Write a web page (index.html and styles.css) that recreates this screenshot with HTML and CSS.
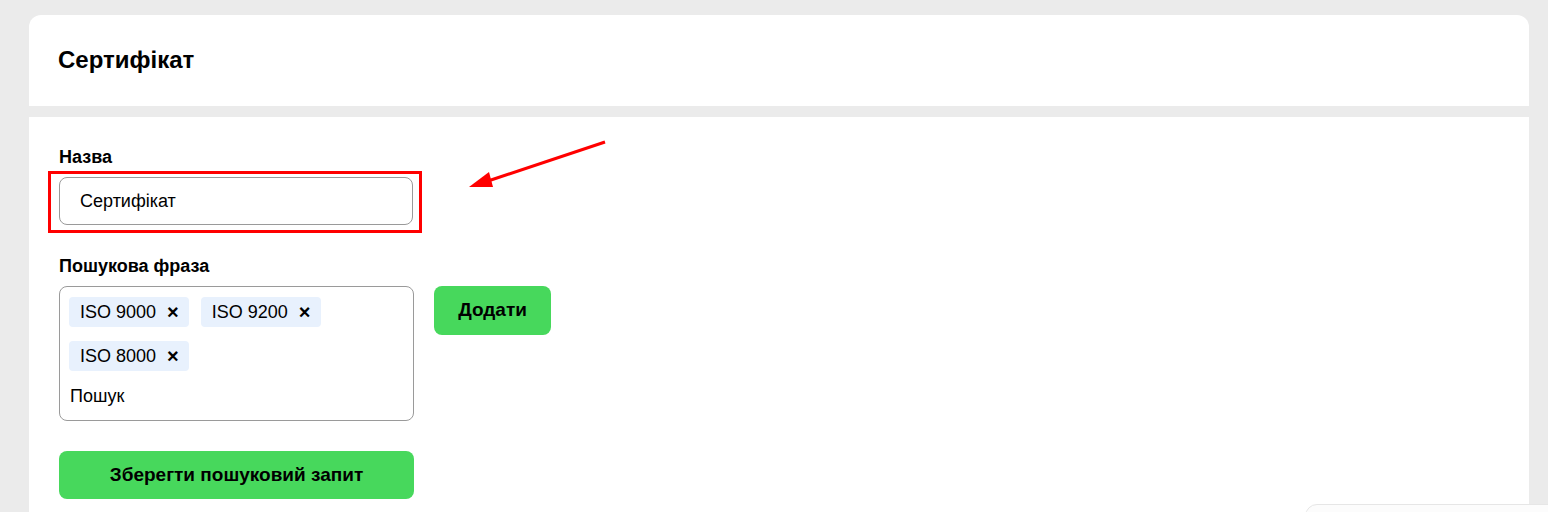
FILE: index.html
```html
<!DOCTYPE html>
<html lang="uk">
<head>
<meta charset="utf-8">
<title>Сертифікат</title>
<link rel="stylesheet" href="styles.css">
</head>
<body>
<div class="page">
  <div class="card card-head">
    <h1 class="title">Сертифікат</h1>
  </div>
  <div class="card card-body">
    <div class="field">
      <label class="label">Назва</label>
      <div class="highlight">
        <div class="input">Сертифікат</div>
      </div>
    </div>
    <div class="field">
      <label class="label">Пошукова фраза</label>
      <div class="phrase-row">
        <div class="tagbox">
          <div class="tags">
            <span class="tag">ISO 9000<span class="x">×</span></span>
            <span class="tag">ISO 9200<span class="x">×</span></span>
            <span class="tag">ISO 8000<span class="x">×</span></span>
          </div>
          <div class="search">Пошук</div>
        </div>
        <button class="btn btn-add">Додати</button>
      </div>
    </div>
    <button class="btn btn-save">Зберегти пошуковий запит</button>
  </div>
  <svg class="arrow" width="160" height="60" viewBox="0 0 160 60">
    <line x1="145" y1="3" x2="28" y2="42" stroke="#ff0000" stroke-width="3"/>
    <polygon points="9,48 29,33 33,48" fill="#ff0000"/>
  </svg>
  <div class="widget"></div>
</div>
</body>
</html>
```
FILE: styles.css
```css
* { box-sizing: border-box; }
html, body { margin: 0; padding: 0; }
body {
  background: #ebebeb;
  font-family: "Liberation Sans", Arial, sans-serif;
  color: #000;
  width: 1548px;
  height: 512px;
  overflow: hidden;
}
.page {
  position: relative;
  padding: 15px 19px 0 29px;
  display: flex;
  flex-direction: column;
  gap: 11px;
  height: 512px;
  overflow: hidden;
}
.card { background: #fff; }
.card-head {
  height: 91px;
  border-radius: 12px 12px 0 0;
  display: flex;
  align-items: center;
  padding-left: 29px;
  flex: none;
}
.title {
  margin: 0;
  font-size: 24px;
  font-weight: 700;
  padding-bottom: 1px;
}
.card-body {
  flex: 1;
  padding: 30px 30px 0 30px;
  display: flex;
  flex-direction: column;
  align-items: flex-start;
}
.field { display: flex; flex-direction: column; }
.label {
  font-size: 18px;
  font-weight: 700;
  line-height: 20px;
  margin-bottom: 10px;
}
.highlight {
  border: 3px solid #ff0000;
  padding: 3px 6px 5px 8px;
  margin: -6px 0 -8px -11px;
  width: 374px;
}
.input {
  border: 1px solid #9a9a9a;
  border-radius: 8px;
  height: 48px;
  width: 354px;
  display: flex;
  align-items: center;
  padding-left: 20px;
  font-size: 18px;
}
.field + .field { margin-top: 31px; }
.phrase-row { display: flex; gap: 20px; align-items: flex-start; }
.tagbox {
  width: 355px;
  height: 135px;
  border: 1px solid #9a9a9a;
  border-radius: 8px;
  padding: 10px 9px 0 9px;
}
.tags { display: flex; flex-wrap: wrap; gap: 14px 12px; width: 300px; }
.tag {
  background: #e8f1fd;
  border-radius: 4px;
  height: 30px;
  padding: 0 10px 0 11px;
  display: inline-flex;
  align-items: center;
  font-size: 18px;
}
.x {
  font-weight: 700;
  font-size: 20px;
  margin-left: 11px;
}
.search {
  font-size: 18px;
  margin-top: 15px;
  padding-left: 1px;
}
.btn {
  border: 0;
  background: #47d85c;
  border-radius: 8px;
  font-family: "Liberation Sans", Arial, sans-serif;
  font-weight: 700;
  font-size: 19px;
  color: #000;
  padding: 0;
}
.btn-add { width: 117px; height: 49px; padding-bottom: 2px; }
.btn-save { width: 355px; height: 48px; margin-top: 30px; flex: none; }
.arrow { position: absolute; left: 460px; top: 139px; }
.widget {
  position: absolute;
  left: 1305px;
  top: 504px;
  width: 260px;
  height: 40px;
  background: #fcfcfc;
  border: 1px solid #e6e6e6;
  border-radius: 12px 0 0 0;
}
```
